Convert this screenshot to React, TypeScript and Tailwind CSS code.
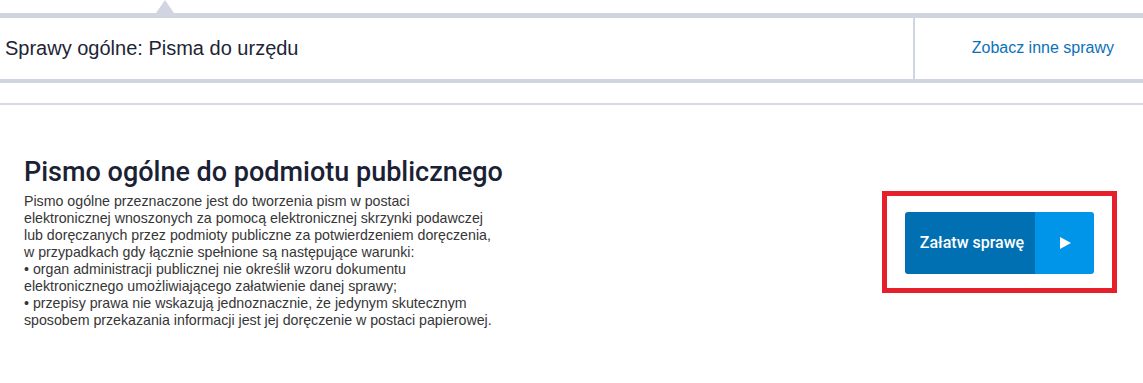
export default function App() {
  return (
    <div className="h-[383px] w-[1143px] overflow-hidden bg-white font-['Liberation_Sans',Arial,sans-serif]">
      <div className="relative h-[13px]">
        <span className="absolute left-[156px] top-0 h-0 w-0 border-x-[9px] border-b-[13px] border-x-transparent border-b-[#d0d5e1]" />
      </div>
      <div className="h-[4.67px] bg-[#d0d5e1]" />
      <div className="flex h-[61px] items-stretch">
        <div className="flex flex-1 items-center pl-[5px] text-[20px] text-[#1d2536]">
          Sprawy ogólne: Pisma do urzędu
        </div>
        <div className="w-[2px] bg-[#d0d5e1]" />
        <div className="flex w-[228px] items-center justify-end pr-[29px] text-[16px] text-[#0b72b9]">
          Zobacz inne sprawy
        </div>
      </div>
      <div className="h-[4.67px] bg-[#d0d5e1]" />
      <div className="h-[20px]" />
      <div className="h-[2px] bg-[#d7dae5]" />

      <div className="flex items-start justify-between pl-[24px] pr-[26px] pt-[50px]">
        <div>
          <h1 className="font-['Roboto',sans-serif] text-[27px] font-medium leading-[34px] text-[#1b2134]">
            Pismo ogólne do podmiotu publicznego
          </h1>
          <p className="mt-[4px] w-[540px] text-[14.2px] leading-[17px] text-[#363636]">
            Pismo ogólne przeznaczone jest do tworzenia pism w postaci
            <br />
            elektronicznej wnoszonych za pomocą elektronicznej skrzynki podawczej
            <br />
            lub doręczanych przez podmioty publiczne za potwierdzeniem doręczenia,
            <br />
            w przypadkach gdy łącznie spełnione są następujące warunki:
            <br />• organ administracji publicznej nie określił wzoru dokumentu
            <br />
            elektronicznego umożliwiającego załatwienie danej sprawy;
            <br />• przepisy prawa nie wskazują jednoznacznie, że jedynym skutecznym
            <br />
            sposobem przekazania informacji jest jej doręczenie w postaci papierowej.
          </p>
        </div>

        <div className="mt-[36px] border-[5px] border-[#e5202a] px-[18px] pb-[14px] pt-[16px]">
          <button className="flex h-[62px] w-[189px] overflow-hidden rounded-[3px] font-['Roboto',sans-serif] text-[16px] font-medium text-white">
            <span className="flex w-[130px] items-center justify-center pl-[4px] bg-[#0070b3]">
              Załatw sprawę
            </span>
            <span className="flex flex-1 items-center justify-center bg-[#0095e8]">
              <svg width="12" height="12" viewBox="0 0 12 12" className="ml-[2px]">
                <polygon points="0,0 11,6 0,12" fill="white" />
              </svg>
            </span>
          </button>
        </div>
      </div>
    </div>
  );
}
